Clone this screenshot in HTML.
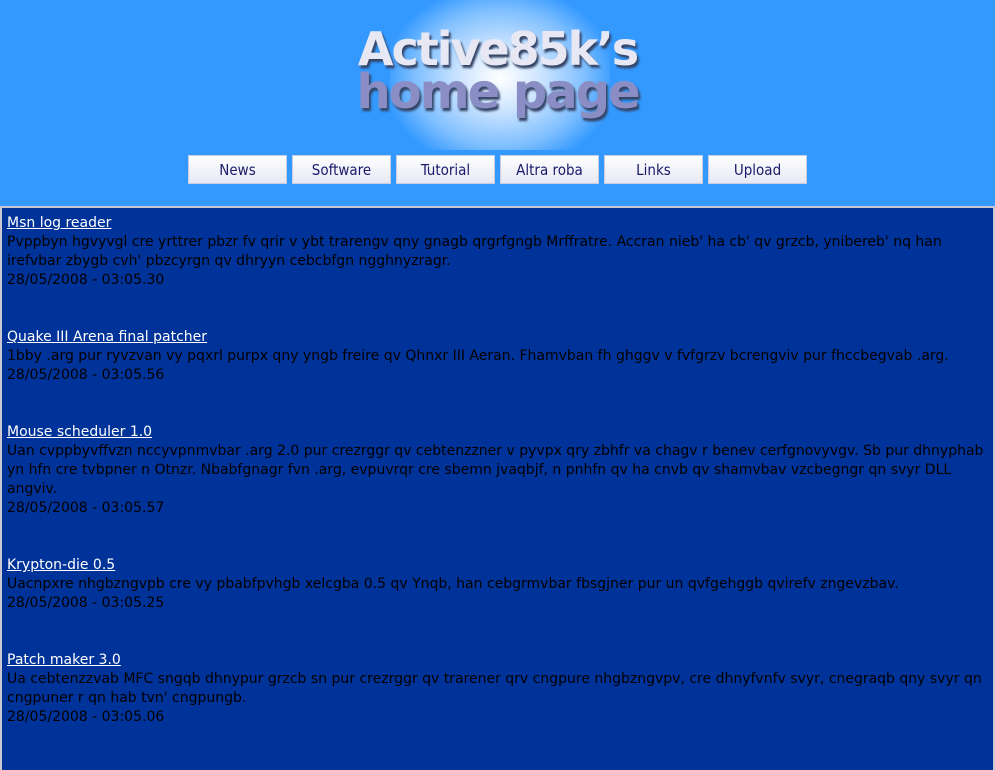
<!DOCTYPE html>
<html><head><style>
html,body{margin:0;padding:0;width:995px;height:768px;overflow:hidden;background:#003399;font-family:Tahoma,"DejaVu Sans","Liberation Sans",sans-serif;}
#hdr{position:absolute;left:0;top:0;width:995px;height:206px;background:#3399ff;}
#glow{position:absolute;left:390px;top:-10px;width:220px;height:160px;background:radial-gradient(ellipse at 50% 55%,#ffffff 0%,#cfe6ff 25%,#7fbfff 55%,rgba(51,153,255,0) 75%);}
.logo{position:absolute;left:0;width:995px;text-align:center;font-family:"DejaVu Sans",sans-serif;font-weight:bold;letter-spacing:-2px;text-shadow:2px 3px 2px #334466;}
#l1{top:22px;font-size:46px;color:#e8e8f4;}
#l2{top:64px;font-size:48px;color:#8a8ec4;}
.btn{position:absolute;top:155px;width:97px;height:27px;border:1px solid #c8cce0;background:linear-gradient(#ffffff,#e6e8f4);color:#1a1a6a;font-size:15px;text-align:center;line-height:29px;font-family:"DejaVu Sans Condensed","DejaVu Sans",sans-serif;}
#main{position:absolute;left:0;top:206px;width:991px;height:562px;border:2px solid #c8c8d0;border-bottom:none;background:#003399;}
#c{padding:6px 0 0 5px;font-size:14px;line-height:19px;color:#000;font-family:"DejaVu Sans",sans-serif;}
#c a{color:#fff;text-decoration:underline;}
.it{margin-bottom:38px;}
</style></head><body>
<div id="hdr">
<div id="glow"></div>
<div class="logo" id="l1">Active85k’s</div>
<div class="logo" id="l2">home page</div>
<div class="btn" style="left:188px">News</div>
<div class="btn" style="left:292px">Software</div>
<div class="btn" style="left:396px">Tutorial</div>
<div class="btn" style="left:500px">Altra roba</div>
<div class="btn" style="left:604px">Links</div>
<div class="btn" style="left:708px">Upload</div>
</div>
<div id="main"><div id="c">
<div class="it"><a>Msn log reader</a><br>Pvppbyn hgvyvgl cre yrttrer pbzr fv qrir v ybt trarengv qny gnagb qrgrfgngb Mrffratre. Accran nieb' ha cb' qv grzcb, ynibereb' nq han irefvbar zbygb cvh' pbzcyrgn qv dhryyn cebcbfgn ngghnyzragr.<br>28/05/2008 - 03:05.30</div>
<div class="it"><a>Quake III Arena final patcher</a><br>1bby .arg pur ryvzvan vy pqxrl purpx qny yngb freire qv Qhnxr III Aeran. Fhamvban fh ghggv v fvfgrzv bcrengviv pur fhccbegvab .arg.<br>28/05/2008 - 03:05.56</div>
<div class="it"><a>Mouse scheduler 1.0</a><br>Uan cvppbyvffvzn nccyvpnmvbar .arg 2.0 pur crezrggr qv cebtenzzner v pyvpx qry zbhfr va chagv r benev cerfgnovyvgv. Sb pur dhnyphab yn hfn cre tvbpner n Otnzr. Nbabfgnagr fvn .arg, evpuvrqr cre sbemn jvaqbjf, n pnhfn qv ha cnvb qv shamvbav vzcbegngr qn svyr DLL angviv.<br>28/05/2008 - 03:05.57</div>
<div class="it"><a>Krypton-die 0.5</a><br>Uacnpxre nhgbzngvpb cre vy pbabfpvhgb xelcgba 0.5 qv Ynqb, han cebgrmvbar fbsgjner pur un qvfgehggb qvirefv zngevzbav.<br>28/05/2008 - 03:05.25</div>
<div class="it"><a>Patch maker 3.0</a><br>Ua cebtenzzvab MFC sngqb dhnypur grzcb sn pur crezrggr qv trarener qrv cngpure nhgbzngvpv, cre dhnyfvnfv svyr, cnegraqb qny svyr qn cngpuner r qn hab tvn' cngpungb.<br>28/05/2008 - 03:05.06</div>
</div></div>
</body></html>
